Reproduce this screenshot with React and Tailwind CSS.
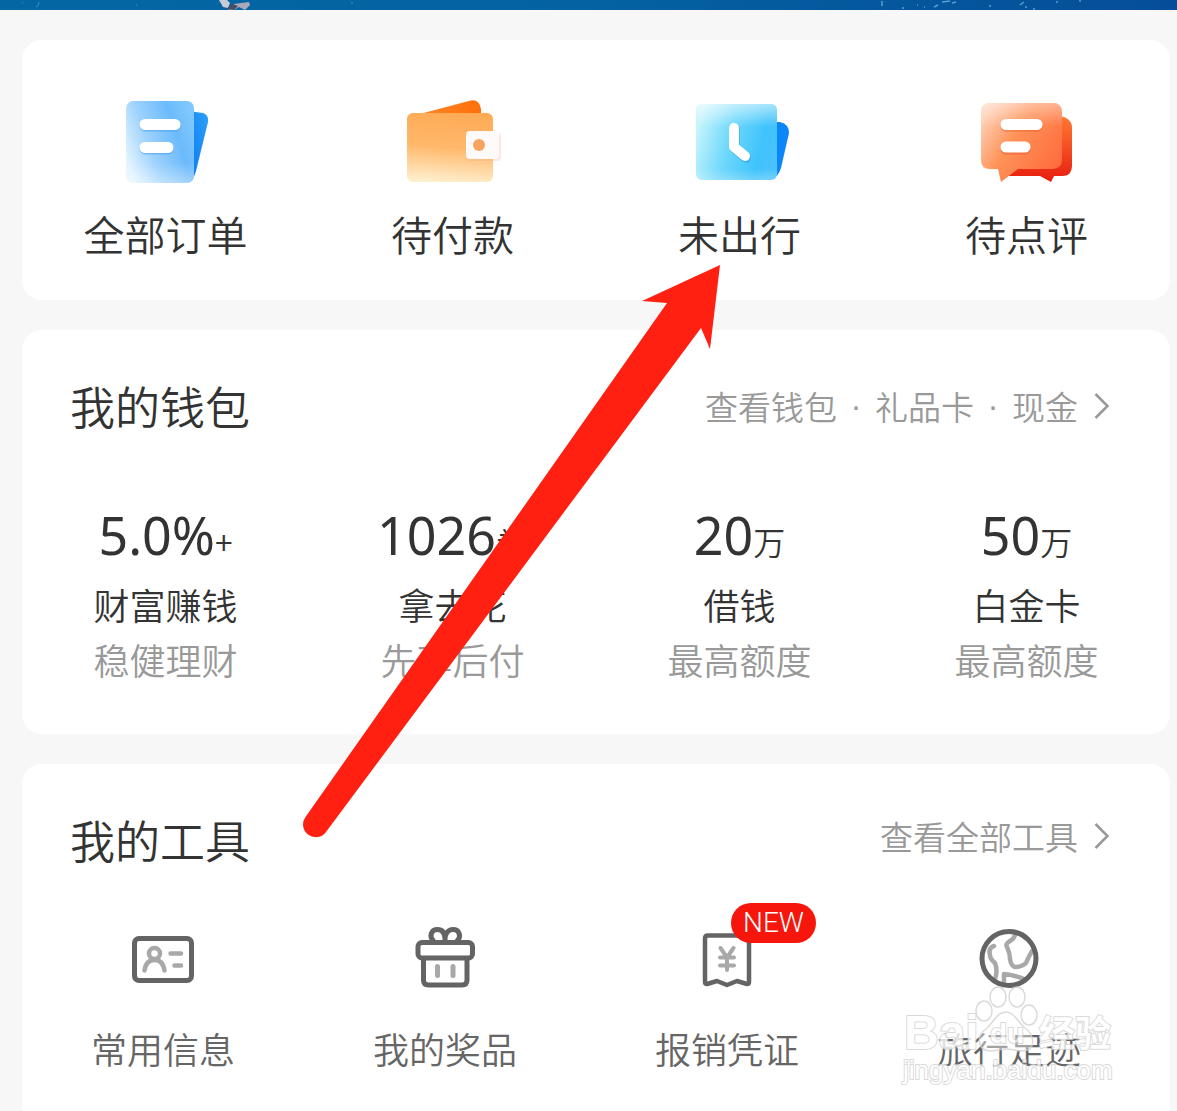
import React from 'react';

function Banner() {
  return (
    <div className="h-[10px] overflow-hidden bg-linear-to-r from-[#0467a4] via-[#0462a2] to-[#064d98]">
      <svg className="block h-[10px] w-full" viewBox="0 0 1177 10" preserveAspectRatio="none" aria-hidden="true">
        <path d="M219 0l4 7 5 1 2-5-3-3z" fill="#c9cbd6" />
        <path d="M228 10l6-6 7-1 8-1 1 3-5 5-6-3-5 3z" fill="#a9a9ba" />
        <path d="M226 9l7-5 5 2-4 4z" fill="#4a4d66" />
        <path d="M36 7q3-1 3-5M22 3h1M136 5h1M351 3h2" stroke="#3f93c4" fill="none" />
        <path d="M882 1v5M917 5h1M934 7l4-2M942 2l8-1M952 3l4-1M902 8h2M924 7h1M990 5v2M1056 2h2M1020 5l4-3M1025 7h2M1033 9h2M1079 1h2" stroke="#7cc0e6" strokeOpacity="0.7" strokeWidth="1.500" fill="none" />
      </svg>
    </div>
  );
}

function AllOrdersIcon() {
  return (
    <svg className="h-[100px] w-[100px]" viewBox="116 90 100 100" aria-hidden="true">
      <defs>
        <linearGradient id="o1" x1="0" y1="0.7" x2="1" y2="0.3">
          <stop offset="0" stopColor="#e3f4ff" />
          <stop offset="0.35" stopColor="#9dd2fd" />
          <stop offset="0.75" stopColor="#6bbafb" />
          <stop offset="1" stopColor="#7fc8fd" />
        </linearGradient>
        <linearGradient id="o2" x1="1" y1="0" x2="0" y2="1">
          <stop offset="0" stopColor="#2ea0fb" />
          <stop offset="1" stopColor="#0878ec" />
        </linearGradient>
        <linearGradient id="o3" x1="0" y1="0" x2="0" y2="1">
          <stop offset="0.75" stopColor="#fff" stopOpacity="0" />
          <stop offset="1" stopColor="#fff" stopOpacity="0.35" />
        </linearGradient>
      </defs>
      <path d="M188 111l15 2q6 2 5 9l-12 49q-2 8-8 11z" fill="url(#o2)" />
      <rect x="126" y="101" width="68" height="82" rx="7" fill="url(#o1)" />
      <rect x="126" y="101" width="68" height="82" rx="7" fill="url(#o3)" />
      <path d="M145 126h30M145 149h23" stroke="#3f93e8" strokeOpacity="0.45" strokeWidth="11" strokeLinecap="round" />
      <path d="M145 124.500h30M145 147.500h23" stroke="#fff" strokeWidth="11" strokeLinecap="round" />
    </svg>
  );
}

function WalletIcon() {
  return (
    <svg className="h-[100px] w-[100px]" viewBox="403 90 100 100" aria-hidden="true">
      <defs>
        <linearGradient id="w1" x1="0.55" y1="0" x2="0.45" y2="1">
          <stop offset="0" stopColor="#ffab55" />
          <stop offset="0.5" stopColor="#ffb86b" />
          <stop offset="1" stopColor="#ffeecb" />
        </linearGradient>
        <linearGradient id="w2" x1="0" y1="0" x2="1" y2="0">
          <stop offset="0" stopColor="#ff8a2c" />
          <stop offset="1" stopColor="#ff6f08" />
        </linearGradient>
      </defs>
      <path d="M412 116l57-15q10-3 12 8v8z" fill="url(#w2)" />
      <rect x="407" y="113" width="86" height="69" rx="6" fill="url(#w1)" />
      <rect x="466" y="133" width="35" height="28" rx="4" fill="#f3a37c" fillOpacity="0.25" />
      <rect x="466" y="131" width="33" height="28" rx="4" fill="#fffafa" />
      <circle cx="479" cy="145" r="6" fill="#f6a460" />
    </svg>
  );
}

function ClockIcon() {
  return (
    <svg className="h-[100px] w-[100px]" viewBox="690 90 100 100" aria-hidden="true">
      <defs>
        <linearGradient id="c1" x1="0" y1="0.4" x2="1" y2="0.65">
          <stop offset="0" stopColor="#c5f4fb" />
          <stop offset="0.4" stopColor="#6fd8fb" />
          <stop offset="0.8" stopColor="#3fc3fb" />
          <stop offset="1" stopColor="#49c2ff" />
        </linearGradient>
        <linearGradient id="c2" x1="0" y1="0" x2="0" y2="1">
          <stop offset="0" stopColor="#fff" stopOpacity="0.55" />
          <stop offset="0.3" stopColor="#fff" stopOpacity="0" />
          <stop offset="0.85" stopColor="#fff" stopOpacity="0" />
          <stop offset="1" stopColor="#fff" stopOpacity="0.25" />
        </linearGradient>
      </defs>
      <path d="M772 122h8q9 2 9 11l-8 35q-3 9-9 11z" fill="#0a86f8" />
      <rect x="696" y="104" width="81" height="76" rx="6" fill="url(#c1)" />
      <rect x="696" y="104" width="81" height="76" rx="6" fill="url(#c2)" />
      <path d="M735 129v20l11 9" fill="none" stroke="#2795d8" strokeOpacity="0.4" strokeWidth="10" strokeLinecap="round" strokeLinejoin="round" />
      <path d="M734 128v19l11 9" fill="none" stroke="#fff" strokeWidth="10" strokeLinecap="round" strokeLinejoin="round" />
    </svg>
  );
}

function ReviewIcon() {
  return (
    <svg className="h-[100px] w-[100px]" viewBox="977 90 100 100" aria-hidden="true">
      <defs>
        <linearGradient id="r1" x1="0" y1="0.2" x2="1" y2="0.8">
          <stop offset="0" stopColor="#ffd2b8" />
          <stop offset="0.4" stopColor="#ff9258" />
          <stop offset="1" stopColor="#ff6a3c" />
        </linearGradient>
        <linearGradient id="r2" x1="0" y1="0" x2="0" y2="1">
          <stop offset="0" stopColor="#ff7a33" />
          <stop offset="1" stopColor="#e81c10" />
        </linearGradient>
        <linearGradient id="r3" x1="0" y1="0" x2="0" y2="1">
          <stop offset="0" stopColor="#fff" stopOpacity="0.4" />
          <stop offset="0.3" stopColor="#fff" stopOpacity="0" />
        </linearGradient>
      </defs>
      <path d="M1008 140l52-24q12 2 12 12v38q0 10-10 10h-8l-3 6-11-6h-32z" fill="url(#r2)" />
      <path d="M990 103h63q9 0 9 9v48q0 8-9 9h-35l-17 13-3-13h-8q-9 0-9-9v-48q0-9 9-9z" fill="url(#r1)" />
      <path d="M990 103h63q9 0 9 9v48q0 8-9 9h-35l-17 13-3-13h-8q-9 0-9-9v-48q0-9 9-9z" fill="url(#r3)" />
      <path d="M1006 126h31M1006 149h19" stroke="#d8481c" strokeOpacity="0.35" strokeWidth="11" strokeLinecap="round" />
      <path d="M1006 124.500h31M1006 147h19" stroke="#fff" strokeWidth="11" strokeLinecap="round" />
    </svg>
  );
}

function IdCardIcon() {
  return (
    <svg className="h-20 w-20" viewBox="123 920 80 80" fill="none" strokeLinecap="round" strokeLinejoin="round" aria-hidden="true">
      <rect x="134.500" y="938.500" width="57" height="42" rx="4.500" stroke="#646464" strokeWidth="5" />
      <g stroke="#a8a8a8" strokeWidth="4.500">
        <circle cx="154.500" cy="953.500" r="5.500" />
        <path d="M144.500 970.500c1-7 4-10.500 10-10.500s9 3.500 10 10.500M170.500 953.500h10.500M174.500 965.500h6.500" />
      </g>
    </svg>
  );
}

function GiftIcon() {
  return (
    <svg className="h-20 w-20" viewBox="405 920 80 80" fill="none" strokeLinecap="round" strokeLinejoin="round" aria-hidden="true">
      <g stroke="#646464" strokeWidth="5">
        <path d="M433.500 941c-5-5-2-11.500 4-11.500 5 0 7.500 4 7.500 10.500 0-6.500 3-10.500 8-10.500 6 0 9 6.500 4 11.500" />
        <rect x="418" y="942.500" width="54.500" height="15.500" rx="4" />
        <path d="M423.500 959v21q0 5 5 5h33.500q5 0 5-5v-21" />
      </g>
      <path d="M437.500 966.500v9M453 966.500v9" stroke="#a8a8a8" strokeWidth="5" />
    </svg>
  );
}

function ReceiptIcon() {
  return (
    <svg className="h-20 w-20" viewBox="687 920 80 80" fill="none" strokeLinecap="round" strokeLinejoin="round" aria-hidden="true">
      <path d="M705 982v-43.500q0-3 3-3h38q3 0 3 3v43.500q0 2-2 2l-10-3-10 4-10-4-10 3q-2 0-2-2z" stroke="#646464" strokeWidth="4.500" />
      <path d="M720.500 948l6.500 9.500 6.500-9.500M727 957v13M720 957.500h14M720 965.500h14" stroke="#a8a8a8" strokeWidth="4" />
    </svg>
  );
}

function GlobeIcon() {
  return (
    <svg className="h-20 w-20" viewBox="969 920 80 80" fill="none" strokeLinecap="round" strokeLinejoin="round" aria-hidden="true">
      <path d="M1015 935q-1 4-5 6-5 3-3 6 3 6 3 12 1 7 5 8 7 0 11-4 2-5 6-12M994 946q-6 2-4 9 0 4 5 8 3 8 0 16M1004 981v-7q10 1 20 5" stroke="#a8a8a8" strokeWidth="4.500" />
      <circle cx="1009" cy="958.500" r="27" stroke="#646464" strokeWidth="5" />
    </svg>
  );
}

function Chevron() {
  return (
    <svg className="ml-4 h-7 w-4" viewBox="0 0 16 28" fill="none" aria-hidden="true">
      <path d="M1.500 2l12 12-12 12" stroke="#999" strokeWidth="2.500" />
    </svg>
  );
}

const orders = [
  { label: '全部订单', Icon: AllOrdersIcon },
  { label: '待付款', Icon: WalletIcon },
  { label: '未出行', Icon: ClockIcon },
  { label: '待点评', Icon: ReviewIcon },
];

const wallet = [
  { value: '5.0%', unit: '+', name: '财富赚钱', note: '稳健理财' },
  { value: '1026', unit: '券', name: '拿去花', note: '先享后付' },
  { value: '20', unit: '万', name: '借钱', note: '最高额度' },
  { value: '50', unit: '万', name: '白金卡', note: '最高额度' },
];

const tools = [
  { label: '常用信息', Icon: IdCardIcon },
  { label: '我的奖品', Icon: GiftIcon },
  { label: '报销凭证', Icon: ReceiptIcon, badge: 'NEW' },
  { label: '旅行足迹', Icon: GlobeIcon },
];

const walletLinks = ['查看钱包', '礼品卡', '现金'];

function Watermark() {
  const outline = 'absolute whitespace-nowrap text-white [-webkit-text-stroke:2px_#d2d2d2] [paint-order:stroke_fill]';
  return (
    <div className="pointer-events-none absolute right-[54px] bottom-[23px] h-[104px] w-[216px] opacity-80 select-none" aria-hidden="true">
      <span className={outline + " left-1 top-[22px] text-[48px] leading-[54px] font-bold font-['Liberation_Sans']"}>Bai</span>
      <svg className="absolute left-[74px] top-0 h-[70px] w-[68px]" viewBox="0 0 68 70" fill="#fff" fillOpacity="0.5" stroke="#d2d2d2" strokeWidth="1.500">
        <ellipse cx="24" cy="13" rx="8" ry="10" />
        <ellipse cx="43" cy="13" rx="8" ry="10" />
        <ellipse cx="10" cy="27" rx="8" ry="10" />
        <ellipse cx="55" cy="31" rx="8" ry="10" />
        <path d="M32 28c8 0 11 9 18 15 11 8 13 24-2 24-6 0-10-2-16-2s-10 2-15 2c-14 0-15-15-5-22 8-7 11-17 20-17z" />
      </svg>
      <span className={outline + " left-[90px] top-[33px] text-[28px] leading-[34px] font-bold font-['Liberation_Sans']"}>du</span>
      <span className={outline + " left-[139px] top-[25px] text-[36px] leading-[44px] font-bold font-['Noto_Sans_CJK_SC']"}>经验</span>
      <span className={outline + " left-[3px] top-[71px] text-[26px] leading-[30px] font-['Liberation_Sans']"}>jingyan.baidu.com</span>
    </div>
  );
}

export default function App() {
  return (
    <div className="relative flex min-h-screen flex-col overflow-hidden bg-[#f7f7f7] font-['Noto_Sans_CJK_SC',sans-serif] font-[350] text-[#333]">
      <Banner />
      <main className="flex flex-1 flex-col gap-[30px] pt-[30px] pr-[7px] pl-[22px]">
        <nav className="grid grid-cols-4 rounded-[20px] bg-white pt-[50px] pb-[37px]">
          {orders.map(({ label, Icon }) => (
            <button key={label} type="button" className="flex flex-col items-center">
              <Icon />
              <span className="mt-[13px] text-[41px] leading-[60px]">{label}</span>
            </button>
          ))}
        </nav>

        <section className="rounded-[20px] bg-white pt-[46px] pb-12">
          <header className="flex items-center justify-between pr-[60px] pl-12">
            <h2 className="text-[45px] leading-[60px]">我的钱包</h2>
            <a href="#wallet" className="flex items-center text-[33px] leading-[60px] text-[#999]">
              {walletLinks.map((text, i) => (
                <React.Fragment key={text}>
                  {i > 0 && <span className="w-[38px] text-center font-['Liberation_Sans']">·</span>}
                  <span>{text}</span>
                </React.Fragment>
              ))}
              <Chevron />
            </a>
          </header>
          <div className="mt-16 grid grid-cols-4">
            {wallet.map((item) => (
              <button key={item.name} type="button" className="flex flex-col items-center">
                <span className="flex items-baseline">
                  <span className="font-['Noto_Sans',sans-serif] text-[52px] leading-[70px] font-normal">{item.value}</span>
                  <span className="text-[32px] leading-10">{item.unit}</span>
                </span>
                <span className="mt-[6px] text-[36px] leading-[56px]">{item.name}</span>
                <span className="text-[36px] leading-[54px] text-[#999]">{item.note}</span>
              </button>
            ))}
          </div>
        </section>

        <section className="relative flex-1 rounded-t-[20px] bg-white pt-[46px] pb-8">
          <header className="flex items-center justify-between pr-[60px] pl-12">
            <h2 className="text-[45px] leading-[60px]">我的工具</h2>
            <a href="#tools" className="flex items-center pb-2 text-[33px] leading-[52px] text-[#999]">
              <span>查看全部工具</span>
              <Chevron />
            </a>
          </header>
          <div className="mt-[50px] grid grid-cols-4 pr-5">
            {tools.map(({ label, Icon, badge }) => (
              <button key={label} type="button" className="flex flex-col items-center">
                <span className="relative">
                  <Icon />
                  {badge && (
                    <span className="absolute -top-[17px] left-11 rounded-full bg-[#f6160b] px-3 font-['Roboto'] text-[28px] leading-10 font-light text-white">
                      {badge}
                    </span>
                  )}
                </span>
                <span className="mt-5 text-[36px] leading-[56px] text-[#666]">{label}</span>
              </button>
            ))}
          </div>
          <Watermark />
        </section>
      </main>

      <svg className="pointer-events-none absolute top-[260px] left-[300px] h-[580px] w-[425px]" viewBox="300 260 425 580" aria-hidden="true">
        <path d="M720 265L642 301L667 303L305.500 817A12.500 12.500 0 0 0 326 832L701 328L710 349Z" fill="#ff2012" />
      </svg>
    </div>
  );
}
